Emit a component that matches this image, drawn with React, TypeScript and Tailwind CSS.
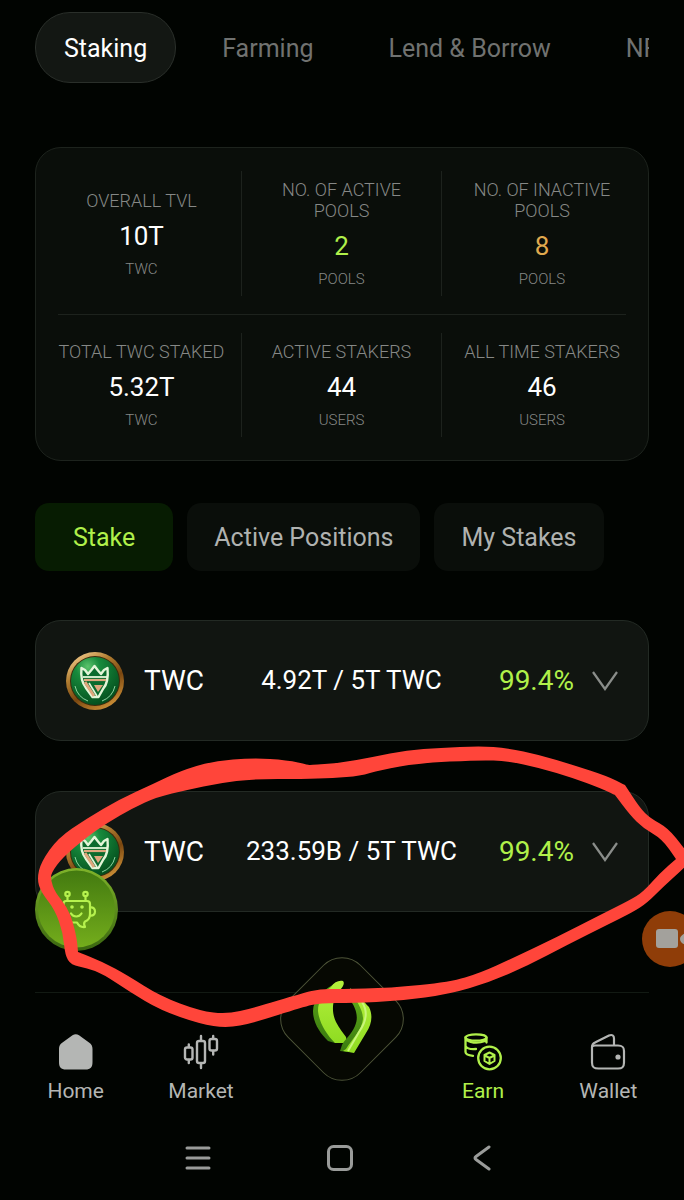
import { useState } from 'react';
import type { ReactNode } from 'react';

type Point = [number, number];

const PRODUCTS = ['Staking', 'Farming', 'Lend & Borrow', 'NFT'];

const STATS = [
  [
    { label: 'OVERALL TVL', value: '10T', unit: 'TWC', tone: 'text-white' },
    { label: 'NO. OF ACTIVE POOLS', value: '2', unit: 'POOLS', tone: 'text-[#b0f04a]' },
    { label: 'NO. OF INACTIVE POOLS', value: '8', unit: 'POOLS', tone: 'text-[#e0a94e]' },
  ],
  [
    { label: 'TOTAL TWC STAKED', value: '5.32T', unit: 'TWC', tone: 'text-white' },
    { label: 'ACTIVE STAKERS', value: '44', unit: 'USERS', tone: 'text-white' },
    { label: 'ALL TIME STAKERS', value: '46', unit: 'USERS', tone: 'text-white' },
  ],
];

const VIEWS = [
  { name: 'Stake', pad: 'px-[38px]' },
  { name: 'Active Positions', pad: 'px-[27px]' },
  { name: 'My Stakes', pad: 'px-[27px]' },
];

const POOLS = [
  { id: 1, token: 'TWC', amount: '4.92T / 5T TWC', apr: '99.4%' },
  { id: 2, token: 'TWC', amount: '233.59B / 5T TWC', apr: '99.4%' },
];

// A repeated point makes a tighter corner.
const MARK_OUTER: Point[] = [
  [37, 879], [41, 862], [58, 838], [86, 819], [120, 799], [153, 784], [180, 771], [213, 761],
  [253, 758], [287, 760], [309, 765], [309, 765], [340, 763], [373, 757], [407, 750], [440, 748],
  [480, 746], [507, 748], [540, 755], [573, 765], [607, 776], [625, 785], [625, 785], [640, 808],
  [650, 818], [668, 828], [684, 848], [692, 859], [684, 868], [663, 887], [647, 903], [633, 912],
  [607, 925], [567, 945], [527, 966], [490, 982], [450, 994], [400, 1001], [353, 1003],
  [320, 1003], [303, 1007], [253, 1023], [227, 1028], [200, 1024], [160, 1010], [130, 992],
  [103, 974], [87, 968], [71, 965], [65, 955], [63, 933], [55, 910], [41, 892],
];

const MARK_INNER: Point[] = [
  [51, 873], [63, 857], [87, 837], [107, 823], [133, 808], [157, 797], [187, 790], [220, 783],
  [253, 779], [303, 779], [333, 778], [360, 776], [380, 770], [420, 763], [480, 760], [507, 761],
  [540, 768], [573, 778], [600, 788], [615, 795], [615, 795], [630, 815], [643, 828], [662, 839],
  [676, 859], [676, 859], [660, 873], [643, 892], [630, 900], [600, 915], [557, 937], [513, 958],
  [480, 973], [450, 982], [390, 988], [340, 989], [320, 989], [303, 993], [253, 1008],
  [227, 1014], [200, 1011], [160, 996], [127, 975], [103, 962], [78, 952], [78, 952], [77, 940],
  [73, 922], [67, 907], [55, 892], [51, 881],
];

// Closed curve through the midpoints, with the points as control handles.
function smoothLoop(points: Point[]): string {
  const mid = (a: Point, b: Point): Point => [(a[0] + b[0]) / 2, (a[1] + b[1]) / 2];
  const start = mid(points[points.length - 1], points[0]);
  const parts = points.map((p, i) => {
    const m = mid(p, points[(i + 1) % points.length]);
    return `Q${p[0]} ${p[1]} ${m[0]} ${m[1]}`;
  });
  return `M${start[0]} ${start[1]}${parts.join('')}Z`;
}

function TokenIcon() {
  return (
    <svg viewBox="0 0 58 58" className="size-[58px] shrink-0" aria-hidden="true">
      <defs>
        <linearGradient id="rim" x1="0.2" y1="0" x2="0.8" y2="1">
          <stop offset="0" stopColor="#f6cf90" />
          <stop offset="0.3" stopColor="#b07c30" />
          <stop offset="0.6" stopColor="#7a4710" />
          <stop offset="1" stopColor="#d99a3c" />
        </linearGradient>
        <radialGradient id="face" cx="0.35" cy="0.2" r="0.85">
          <stop offset="0" stopColor="#5cc46c" />
          <stop offset="0.3" stopColor="#178a3c" />
          <stop offset="1" stopColor="#034b1c" />
        </radialGradient>
      </defs>
      <circle cx="29" cy="29" r="29" fill="url(#rim)" />
      <circle cx="29" cy="29" r="25" fill="#3c2a0c" />
      <circle cx="29" cy="29" r="24" fill="url(#face)" />
      <path
        d="M9 34 A21 21 0 0 0 22 49 M49 34 A21 21 0 0 1 36 49"
        fill="none"
        stroke="#8fd6a2"
        strokeWidth="1"
      />
      <path
        d="M15.500 16 L19 18 L22 22 L25 18.500 L28.500 14 L32 18.500 L35 22 L38 18 L41.500 16 C42.500 26 41.500 32 37 37 L32.500 45 H26.500 L20 36 C16 31 14.500 25 15.500 16 Z"
        fill="#0b6b2d"
        stroke="#e3f5d8"
        strokeWidth="2.4"
        strokeLinejoin="round"
      />
      <path d="M17 25 H41" stroke="#e3f5d8" strokeWidth="1.8" />
      <path d="M18 28 H40" stroke="#dfa67c" strokeWidth="2.2" />
      <path d="M19 30 L28 44" stroke="#dfa67c" strokeWidth="3" />
      <path d="M23 31 L31 44" stroke="#e3f5d8" strokeWidth="1.6" />
      <path d="M28 33 H37 L32 40 Z" fill="#dfa67c" />
    </svg>
  );
}

function HomeIcon() {
  return (
    <svg viewBox="0 0 38 38" className="size-[38px]" fill="currentColor" aria-hidden="true">
      <path d="M15.500 2.300 C17.500 0.800 20 0.800 22 2.300 L32 9.500 C34.500 11.300 35.500 13 35.500 16 V29 C35.500 34.500 33.500 36.500 28.500 36.500 H9 C4 36.500 2 34.500 2 29 V16 C2 13 3 11.300 5.500 9.500 Z" />
    </svg>
  );
}

function MarketIcon() {
  return (
    <svg
      viewBox="0 0 38 38"
      className="size-[38px]"
      fill="none"
      stroke="currentColor"
      strokeWidth="2.4"
      strokeLinecap="round"
      aria-hidden="true"
    >
      <rect x="3" y="14.500" width="7.500" height="12" rx="2" />
      <path d="M6.800 11.500 V14 M6.800 27 V30" />
      <rect x="15" y="8" width="8" height="22" rx="2" />
      <path d="M19 3 V7.500 M19 30.500 V35" />
      <rect x="27.500" y="6" width="7.500" height="11.500" rx="2" />
      <path d="M31.200 3 V5.500 M31.200 18 V21.500" />
    </svg>
  );
}

function EarnIcon() {
  return (
    <svg
      viewBox="0 0 38 38"
      className="size-[38px]"
      fill="none"
      stroke="currentColor"
      strokeWidth="2.3"
      strokeLinecap="round"
      strokeLinejoin="round"
      aria-hidden="true"
    >
      <ellipse cx="12" cy="4.500" rx="10.500" ry="3.200" />
      <path d="M1.500 4.500 V19 C1.500 21 4 22.300 9 22.800 M22.500 4.500 V9.500 M1.500 5.500 C4 10 14 10.800 21 8 M1.500 13 C3 15.500 7 16.500 12 16" />
      <circle cx="25.500" cy="25" r="11.300" />
      <path
        d="M25.500 19.500 L30.500 22 V28 L25.500 31 L20.500 28 V22 Z M20.800 22.500 L25.500 25 L30.200 22.500 M25.500 25 V30.500"
        strokeWidth="2"
      />
    </svg>
  );
}

function WalletIcon() {
  return (
    <svg
      viewBox="0 0 38 38"
      className="size-[38px]"
      fill="none"
      stroke="currentColor"
      strokeWidth="2.2"
      strokeLinecap="round"
      strokeLinejoin="round"
      aria-hidden="true"
    >
      <path d="M3 14 C3 12.600 4.500 12.500 6 12.500 H29 C33.500 12.500 35 14 35 18 V29.500 C35 34 33.500 35.500 29 35.500 H9.500 C4.500 35.500 3 34 3 29.500 Z" />
      <path d="M3 14 C3 11.500 4 10.300 6.500 9.200 L20 2.600 C23 1.200 25 2.500 25 5.500 V12" />
      <circle cx="29" cy="24" r="1.500" fill="currentColor" />
    </svg>
  );
}

function CenterLogo() {
  return (
    <svg viewBox="0 0 124 124" className="size-[124px]" aria-hidden="true">
      <defs>
        <linearGradient id="leafLight" x1="0" y1="0" x2="0" y2="1">
          <stop offset="0" stopColor="#b4f03c" />
          <stop offset="1" stopColor="#8fdc22" />
        </linearGradient>
        <linearGradient id="leafDark" x1="0" y1="0" x2="0" y2="1">
          <stop offset="0" stopColor="#5ca818" />
          <stop offset="1" stopColor="#3a7a10" />
        </linearGradient>
      </defs>
      <rect
        x="11"
        y="11"
        width="102"
        height="102"
        rx="26"
        transform="rotate(45 62 62)"
        fill="#060802"
        stroke="#4d5438"
        strokeWidth="1"
      />
      <path
        d="M58 25 C44 32 33 42 33 54 C33 66 40 76 48 84 L55 86 L58 80 L46 52 Z"
        fill="url(#leafDark)"
      />
      <path
        d="M51 30 C54 25 59 23 63 24 C65 26 63 30 60 33 C52 41 51 55 56 65 C59 71 63 76 66 80 L67 86 H55 C46 77 39 65 38 54 C38 44 43 36 51 30 Z"
        fill="url(#leafLight)"
      />
      <path
        d="M69 42 C76 50 79 60 75 69 C71 78 65 82 62 88 L60 94 L68 95 L86 66 L84 44 Z"
        fill="url(#leafDark)"
      />
      <path
        d="M70 31 C76 35 84 45 89 50 C93 58 92 67 86 76 L74 96 L63 94 L66 92 C72 82 82 73 83 62 C83 52 76 44 70 31 Z"
        fill="url(#leafLight)"
      />
      <path
        d="M82 45 C88 54 86 65 79 75 L68 94"
        fill="none"
        stroke="#c9f67c"
        strokeWidth="2"
      />
    </svg>
  );
}

function NavItem({
  label,
  active,
  children,
}: {
  label: string;
  active?: boolean;
  children: ReactNode;
}) {
  return (
    <a
      href="#"
      aria-current={active ? 'page' : undefined}
      className={`mt-10 flex flex-col items-center gap-[6px] text-[21px] leading-7 ${
        active ? 'text-[#b0f04a]' : 'text-[#b4b6b4]'
      }`}
    >
      {children}
      {label}
    </a>
  );
}

function PoolRow({ token, amount, apr }: { token: string; amount: string; apr: string }) {
  return (
    <button
      type="button"
      className="flex h-[121px] w-full items-center rounded-[26px] border border-[#232a24] bg-[#111511] px-[30px] text-white"
    >
      <TokenIcon />
      <span className="ml-5 text-[28px]">{token}</span>
      <span className="flex-1 text-center text-[26px]">{amount}</span>
      <span className="text-[28px] text-[#b0f04a]">{apr}</span>
      <svg viewBox="0 0 26 20" className="ml-[18px] h-5 w-[26px]" fill="none" aria-hidden="true">
        <path d="M1 1 L13 18 L25 1" stroke="#8a8d8a" strokeWidth="2.2" />
      </svg>
    </button>
  );
}

function ChatBotButton() {
  return (
    <button
      type="button"
      aria-label="Open assistant"
      className="absolute top-[868px] left-[35px] size-[83px]"
    >
      <svg viewBox="0 0 83 83" className="size-full" fill="none" aria-hidden="true">
        <defs>
          <linearGradient id="bot" x1="0" y1="0" x2="0" y2="1">
            <stop offset="0" stopColor="#437a10" />
            <stop offset="1" stopColor="#74ad1c" />
          </linearGradient>
          <linearGradient id="botRim" x1="0" y1="0" x2="0" y2="1">
            <stop offset="0" stopColor="#7fb32a" />
            <stop offset="1" stopColor="#3a6610" />
          </linearGradient>
        </defs>
        <circle cx="41.500" cy="41.500" r="41.500" fill="url(#botRim)" />
        <circle cx="41.500" cy="41" r="38.500" fill="url(#bot)" />
        <g stroke="#b6f24e" strokeWidth="2.2" strokeLinecap="round" strokeLinejoin="round">
          <circle cx="32.500" cy="26" r="2.200" />
          <circle cx="50.500" cy="26" r="2.200" />
          <path d="M32.500 28.500 V33 M50.500 28.500 V33" />
          <path d="M31 33 H52 C54 33 55 34 55 36 V46 C55 50 53 52.500 50 53.500 C48.500 55 49 57 50 59 C46 59.500 43.500 57.500 42 54.500 H36 C31 54 28.500 51 28.500 46 V36 C28.500 34 29 33 31 33 Z" />
          <path d="M55 39.500 C58.500 39 60 41 60 43.500 C60 46 58.500 48 55 47.500 M28.500 39.500 C25 39 24 41 24 43.500 C24 46 25 48 28.500 47.500" />
          <path d="M36 45.500 C38.500 49.500 44 49.500 46.500 45.500" />
        </g>
        <circle cx="37" cy="39" r="1.800" fill="#b6f24e" />
        <circle cx="47" cy="39" r="1.800" fill="#b6f24e" />
      </svg>
    </button>
  );
}

function RecorderBubble() {
  return (
    <button
      type="button"
      aria-label="Screen recorder"
      className="absolute top-[911px] -right-[14px] size-14 rounded-full bg-[#8f3d08]"
    >
      <svg viewBox="0 0 56 56" className="size-full" fill="#a3a19c" aria-hidden="true">
        <rect x="14" y="18" width="22" height="19" rx="3" />
        <path d="M38 28 C38 24.500 41 23.500 46 20 V36 C41 32.500 38 31.500 38 28 Z" />
      </svg>
    </button>
  );
}

export default function App() {
  const [product, setProduct] = useState('Staking');
  const [view, setView] = useState('Stake');

  return (
    <div className="relative min-h-screen overflow-hidden bg-[#010401] font-['Roboto','Noto_Sans',sans-serif]">
      <main className="px-[35px] pt-3">
        <nav className="flex gap-[17px] overflow-hidden" aria-label="Products">
          {PRODUCTS.map((name) => (
            <button
              key={name}
              type="button"
              onClick={() => {
                setProduct(name);
              }}
              className={`h-[71px] shrink-0 rounded-[35px] border px-7 pt-0.5 text-[25px] ${
                name === product
                  ? 'border-[#2a2f2a] bg-[#131713] text-white'
                  : 'border-transparent text-[#707270]'
              }`}
            >
              {name}
            </button>
          ))}
        </nav>

        <section className="mt-16 rounded-[26px] border border-[#1d231d] bg-[#0a0e0a] px-[6px] py-[23px]">
          {STATS.map((row, i) => (
            <div key={i}>
              {i > 0 && <hr className="mx-4 my-[18px] border-[#1d221d]" />}
              <dl className="grid grid-cols-3 divide-x divide-[#1d221d]">
                {row.map((s) => (
                  <div
                    key={s.label}
                    className="flex flex-col items-center justify-center gap-[7px] px-4 py-2 text-center"
                  >
                    <dt className="text-lg leading-[21px] font-light text-[#868886]">{s.label}</dt>
                    <dd className={`text-[26px] leading-9 ${s.tone}`}>{s.value}</dd>
                    <dd className="text-[15px] leading-[17px] font-light text-[#868886]">
                      {s.unit}
                    </dd>
                  </div>
                ))}
              </dl>
            </div>
          ))}
        </section>

        <div className="mt-[42px] flex gap-[14px]">
          {VIEWS.map(({ name, pad }) => (
            <button
              key={name}
              type="button"
              onClick={() => {
                setView(name);
              }}
              className={`h-[68px] rounded-[14px] pt-0.5 text-[25px] ${pad} ${
                name === view ? 'bg-[#071c02] text-[#b0f04a]' : 'bg-[#0a0e0a] text-[#b0b2b0]'
              }`}
            >
              {name}
            </button>
          ))}
        </div>

        <div className="mt-[49px] flex flex-col gap-[50px]">
          {POOLS.map((p) => (
            <PoolRow key={p.id} token={p.token} amount={p.amount} apr={p.apr} />
          ))}
        </div>
      </main>

      <footer className="mt-20">
        <hr className="mx-[35px] border-[#121a13]" />
        <nav
          className="grid grid-cols-[4fr_4fr_5fr_4fr_4fr] items-start px-[13px]"
          aria-label="Main"
        >
          <NavItem label="Home">
            <HomeIcon />
          </NavItem>
          <NavItem label="Market">
            <MarketIcon />
          </NavItem>
          <a href="#" aria-label="Swap" className="-mt-9 flex justify-center">
            <CenterLogo />
          </a>
          <NavItem label="Earn" active>
            <EarnIcon />
          </NavItem>
          <NavItem label="Wallet">
            <WalletIcon />
          </NavItem>
        </nav>

        <div className="mt-10 flex items-center justify-center gap-[116px] pr-1 text-[#9a9c9a]">
          <button type="button" aria-label="Recent apps">
            <svg
              viewBox="0 0 26 26"
              className="size-[26px]"
              stroke="currentColor"
              strokeWidth="3"
              strokeLinecap="round"
            >
              <path d="M2 3 H24 M2 13 H24 M2 23 H24" />
            </svg>
          </button>
          <button type="button" aria-label="Home screen">
            <svg
              viewBox="0 0 26 26"
              className="size-[26px]"
              fill="none"
              stroke="currentColor"
              strokeWidth="3"
            >
              <rect x="1.500" y="1.500" width="23" height="23" rx="5" />
            </svg>
          </button>
          <button type="button" aria-label="Back">
            <svg
              viewBox="0 0 26 26"
              className="size-[26px]"
              fill="none"
              stroke="currentColor"
              strokeWidth="3"
              strokeLinecap="round"
              strokeLinejoin="round"
            >
              <path d="M20 2 L7 11.500 Q5 13 7 14.500 L20 24" />
            </svg>
          </button>
        </div>
      </footer>

      <ChatBotButton />
      <RecorderBubble />

      {/* Freehand marker ring around the second pool */}
      <svg
        viewBox="0 740 684 300"
        className="pointer-events-none absolute top-[740px] left-0 h-[300px] w-[684px]"
        aria-hidden="true"
      >
        <path
          d={smoothLoop(MARK_OUTER) + smoothLoop(MARK_INNER)}
          fill="#ff453a"
          fillRule="evenodd"
        />
      </svg>
    </div>
  );
}
